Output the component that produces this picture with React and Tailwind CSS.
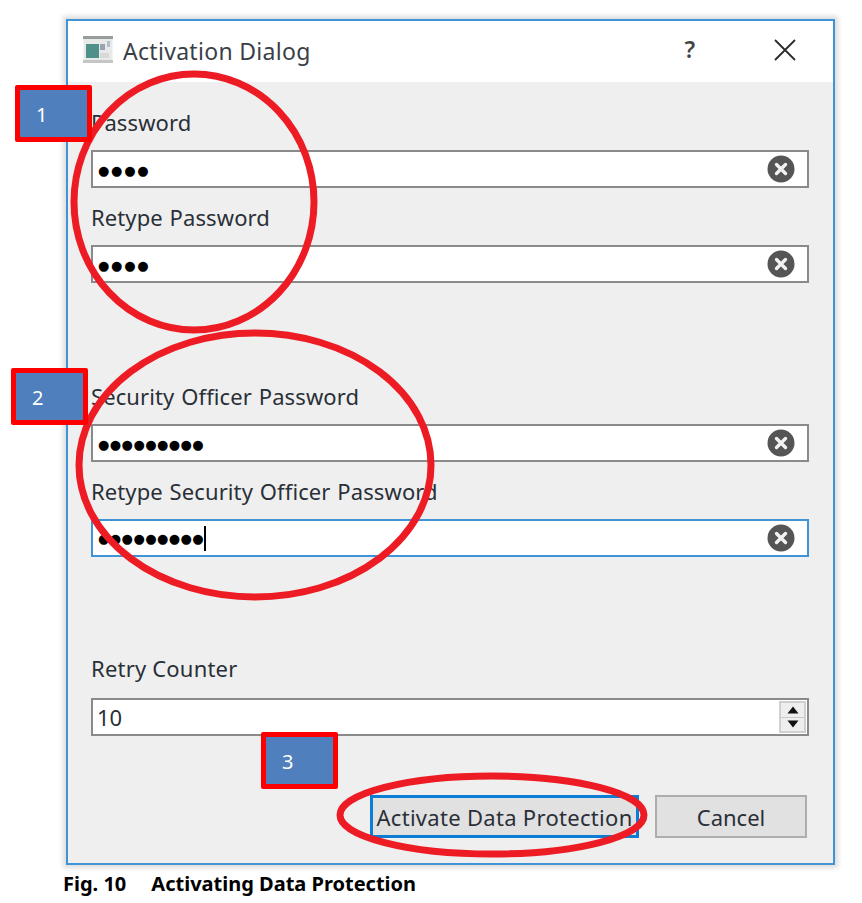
const FONT = "font-['Noto_Sans',sans-serif]"

function ClearIcon() {
  return (
    <svg width="28" height="28" viewBox="0 0 28 28" className="shrink-0">
      <circle cx="14" cy="14" r="13.5" fill="#555555" />
      <path d="M9.5 9.5l9 9M18.5 9.5l-9 9" stroke="#f2f2f2" strokeWidth="3.4" strokeLinecap="round" />
    </svg>
  )
}

function Field({ label, dots, tight, focused, className = '' }) {
  return (
    <div className={className}>
      <div className="flex h-[57px] items-end pb-[14px] text-[22px] leading-[28px] tracking-[0.1px] whitespace-pre text-[#2a2f38] [word-spacing:1px]">
        {label}
      </div>
      <div
        className={
          'flex h-[38px] items-center justify-between border-2 bg-white pl-[5px] pr-[12px] ' +
          (focused ? 'border-[#3f94d8]' : 'border-[#8a8a8a]')
        }
      >
        <div className={'flex items-center ' + (focused ? '' : 'pt-[3px]')}>
          <span
            className={
              "font-['DejaVu_Sans',sans-serif] text-[13px] leading-none text-black " +
              (tight ? 'tracking-[0.45px]' : 'tracking-[1.75px]')
            }
          >
            {dots}
          </span>
          {focused && <span className="h-[25px] w-[2px] bg-black" />}
        </div>
        <ClearIcon />
      </div>
    </div>
  )
}

function SpinBox() {
  return (
    <div className="flex h-[38px] items-center justify-between border-2 border-[#8a8a8a] bg-white pl-[4px] pr-px">
      <span className="text-[22px] leading-none text-[#2a2f38]">10</span>
      <div className="flex h-[32px] w-[27px] flex-col border-2 border-[#d0d0d0] bg-[#eeeeee]">
        <div className="flex flex-1 items-center justify-center border-b border-[#c8c8c8]">
          <svg width="12" height="8" viewBox="0 0 12 8">
            <path d="M6 0.5L11.5 7.5H0.5z" fill="#111111" />
          </svg>
        </div>
        <div className="flex flex-1 items-center justify-center">
          <svg width="12" height="8" viewBox="0 0 12 8">
            <path d="M6 7.5L11.5 0.5H0.5z" fill="#111111" />
          </svg>
        </div>
      </div>
    </div>
  )
}

function Badge({ n, className }) {
  return (
    <div
      className={
        'absolute flex h-[57px] w-[77px] items-center rounded-[2px] border-[5px] border-[#fe0000] bg-[#4f7fbc] pl-[16px] pt-[3px] text-[20px] text-white ' +
        className
      }
    >
      {n}
    </div>
  )
}

export default function App() {
  return (
    <div className={'relative h-[903px] w-[862px] overflow-hidden bg-white pl-[66px] pt-[19px] ' + FONT}>
      <div className="flex h-[846px] w-[769px] flex-col border-2 border-[#3f94d8] bg-[#efefef] shadow-[0_0_5px_3px_#dcdcdc]">
        <div className="flex h-[61px] shrink-0 items-center bg-white pl-[15px] pr-[37px]">
          <svg width="30" height="27" viewBox="0 0 30 27" className="-mt-[4px] shrink-0">
            <rect x="0.5" y="0.5" width="29" height="26" fill="#e8eaea" />
            <rect x="0" y="0" width="30" height="3" fill="#9a9d9d" />
            <rect x="0" y="24" width="30" height="3" fill="#c4c6c6" />
            <rect x="3" y="8" width="13" height="14" fill="#4f9088" />
            <rect x="17" y="8" width="5" height="6" fill="#97a3b0" />
            <rect x="24" y="5" width="3" height="6" fill="#afc2cc" />
            <rect x="17" y="17" width="9" height="5" fill="#d8dada" />
          </svg>
          <span className="ml-[10px] text-[23px] leading-none tracking-[0.3px] text-[#3a3f47]">Activation Dialog</span>
          <span className="-mt-[5px] ml-auto text-[23px] font-semibold leading-none text-[#444444]">?</span>
          <svg width="22" height="22" viewBox="0 0 22 22" className="-mt-[4px] ml-[79px]">
            <path d="M1 1l20 20M21 1L1 21" stroke="#2b2b2b" strokeWidth="1.8" />
          </svg>
        </div>

        <div className="flex flex-1 flex-col pl-[23px] pr-[24px] pt-[11px]">
          <Field label="Password" dots="●●●●" />
          <Field label="Retype Password" dots="●●●●" />
          <Field className="mt-[84px]" label="Security Officer Password" dots="●●●●●●●●●" tight />
          <Field label="Retype Security Officer Password" dots="●●●●●●●●●" tight focused />
          <div className="mt-[84px]">
            <div className="flex h-[57px] items-end pb-[16px] text-[22px] leading-[28px] tracking-[0.2px] text-[#2a2f38]">
              Retry Counter
            </div>
            <SpinBox />
          </div>
          <div className="mt-[59px] flex justify-end gap-[16px] pr-[2px]">
            <button
              type="button"
              className="h-[43px] w-[269px] border-[3px] border-[#0c7cd5] bg-[#e1e1e1] text-[22px] leading-none tracking-[0.3px] text-[#2a2f38]"
            >
              Activate Data Protection
            </button>
            <button
              type="button"
              className="h-[43px] w-[152px] border-2 border-[#adadad] bg-[#e1e1e1] text-[22px] leading-none text-[#2a2f38]"
            >
              Cancel
            </button>
          </div>
        </div>
      </div>

      <p className="-ml-[3px] mt-[5px] flex gap-[25px] text-[20px] font-bold leading-[28px] text-black">
        <span>Fig. 10</span>
        <span>Activating Data Protection</span>
      </p>

      <svg className="pointer-events-none absolute inset-0" width="862" height="903" viewBox="0 0 862 903" fill="none">
        <ellipse cx="194" cy="202" rx="120" ry="128" stroke="#ed1c24" strokeWidth="7" />
        <ellipse cx="255" cy="465" rx="176" ry="132" stroke="#ed1c24" strokeWidth="7" />
        <ellipse cx="492" cy="815" rx="152" ry="39" stroke="#ed1c24" strokeWidth="7" />
      </svg>

      <Badge n="1" className="left-[15px] top-[85px]" />
      <Badge n="2" className="left-[11px] top-[368px]" />
      <Badge n="3" className="left-[261px] top-[732px]" />
    </div>
  )
}
